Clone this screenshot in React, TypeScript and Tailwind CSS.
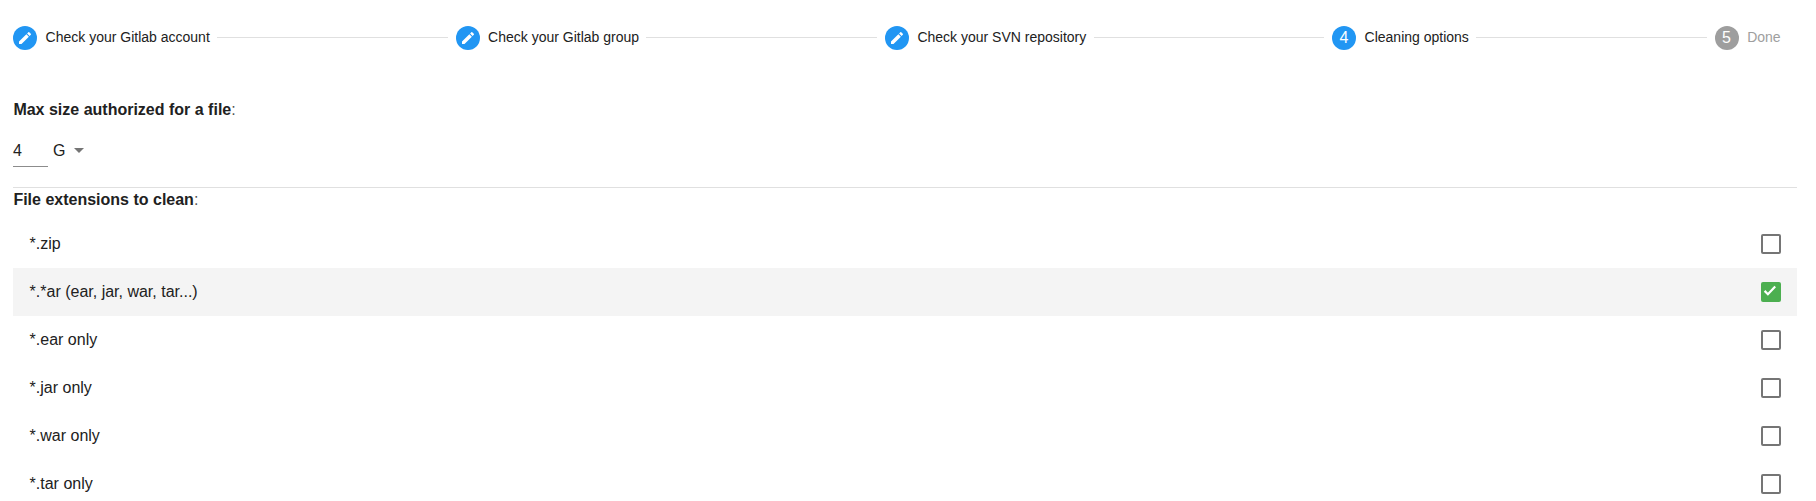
import { Fragment } from "react";

type Step = { label: string; icon: "edit" | number; done?: boolean };

const steps: Step[] = [
  { label: "Check your Gitlab account", icon: "edit" },
  { label: "Check your Gitlab group", icon: "edit" },
  { label: "Check your SVN repository", icon: "edit" },
  { label: "Cleaning options", icon: 4 },
  { label: "Done", icon: 5, done: true },
];

const extensions = [
  { label: "*.zip", checked: false },
  { label: "*.*ar (ear, jar, war, tar...)", checked: true },
  { label: "*.ear only", checked: false },
  { label: "*.jar only", checked: false },
  { label: "*.war only", checked: false },
  { label: "*.tar only", checked: false },
];

function EditIcon() {
  return (
    <svg viewBox="0 0 24 24" className="size-4 fill-white">
      <path d="M3 17.25V21h3.75L17.81 9.94l-3.75-3.75L3 17.25zM20.71 7.04a1 1 0 0 0 0-1.41l-2.34-2.34a1 1 0 0 0-1.41 0l-1.83 1.83 3.75 3.75 1.83-1.83z" />
    </svg>
  );
}

function Checkbox({ checked }: { checked: boolean }) {
  if (!checked) {
    return <span className="size-5 rounded-[2px] border-2 border-[#757575]" />;
  }
  return (
    <span className="size-5 rounded-[2px] bg-[#4caf50]">
      <svg viewBox="0 0 20 20" className="size-5" fill="none" stroke="white" strokeWidth="2.2">
        <path d="M3.6 8.9 6.9 12.2 14.2 4.5" />
      </svg>
    </span>
  );
}

export default function App() {
  return (
    <div className="h-[501px] overflow-hidden bg-white pl-[13px] pr-[19px] font-['Liberation_Sans',Arial,sans-serif] text-base text-[#212121]">
      <div className="flex h-[76px] items-center gap-2 pr-[17px]">
        {steps.map((step, i) => (
          <Fragment key={step.label}>
            {i > 0 && <div className="mb-px h-px flex-1 bg-[#e0e0e0]" />}
            <div className="flex items-center gap-2">
              <span
                className={`flex size-6 items-center justify-center rounded-full leading-6 text-white ${
                  step.done ? "bg-[#9e9e9e]" : "bg-[#2196f3]"
                }`}
              >
                {step.icon === "edit" ? <EditIcon /> : step.icon}
              </span>
              <span className={`mb-0.5 -mr-[0.6px] pl-[0.6px] text-sm leading-5 whitespace-nowrap ${step.done ? "text-[#9e9e9e]" : ""}`}>
                {step.label}
              </span>
            </div>
          </Fragment>
        ))}
      </div>

      <div className="pt-[22px] pl-[0.4px] leading-6">
        <b>Max size authorized for a file</b>
        <span className="text-[#555555]">:</span>
      </div>
      <div className="mt-3.5 flex h-[31px] gap-[5px] leading-6">
        <div className="w-[35px] border-b border-[#8c8c8c] pt-[3px]">4</div>
        <div className="flex items-start gap-[9px] pt-[3px]">
          <span>G</span>
          <svg viewBox="0 0 10 5" className="mt-[9px] h-[5px] w-[10px] fill-[#757575]">
            <path d="M0 0h10L5 5z" />
          </svg>
        </div>
      </div>

      <div className="mt-5 border-t border-[#e0e0e0] pl-[0.4px] leading-6">
        <b>File extensions to clean</b>
        <span className="text-[#555555]">:</span>
      </div>
      <div className="mt-2">
        {extensions.map((ext) => (
          <div
            key={ext.label}
            className={`flex h-12 items-center justify-between px-4 ${ext.checked ? "bg-[#f4f4f4]" : ""}`}
          >
            <span className="pl-[0.6px]">{ext.label}</span>
            <Checkbox checked={ext.checked} />
          </div>
        ))}
      </div>
    </div>
  );
}
